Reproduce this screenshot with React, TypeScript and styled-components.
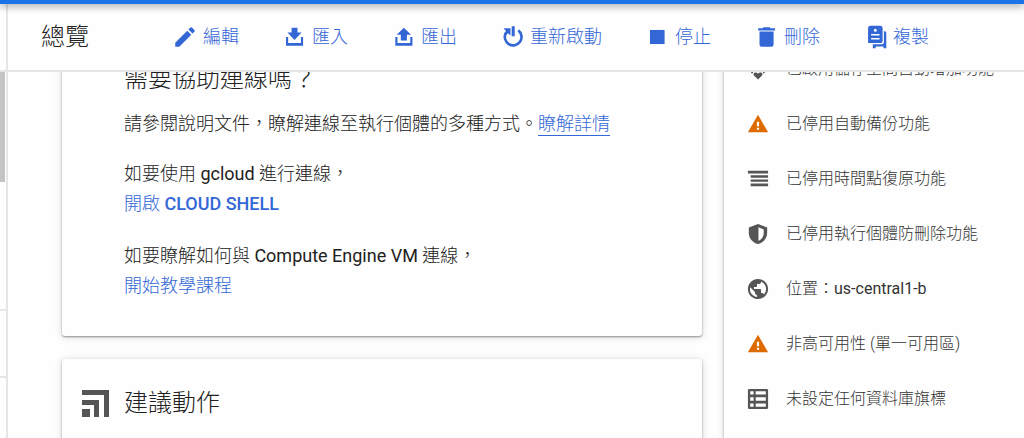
import React from 'react';
import styled, { createGlobalStyle, css } from 'styled-components';

const GlobalStyle = createGlobalStyle`
  * { box-sizing: border-box; }
  body {
    margin: 0;
    background: #fefefe;
    color: #212121;
    font-family: Roboto, "Noto Sans CJK TC", sans-serif;
    font-size: 18px;
    font-weight: 300;
  }
  h1, h2, p, ul { margin: 0; padding: 0; font-weight: 300; }
`;

const Page = styled.div`
  display: flex;
  flex-direction: column;
  height: 100vh;
  overflow: hidden;
`;

const TopBar = styled.div`
  position: relative;
  flex: none;
  height: 4px;
  background: #1a73e8;
  box-shadow: 0 1px 8px rgba(0, 0, 0, 0.6);
`;

const Shell = styled.div`
  display: flex;
  flex: 1;
  min-height: 0;
`;

const Rail = styled.nav`
  flex: none;
  display: flex;
  flex-direction: column;
  width: 8px;
  border-right: 2px solid #e6e6e6;
`;

const RailCell = styled.div<{ $height: number; $thumb?: boolean }>`
  height: ${(p) => p.$height}px;
  border-bottom: ${(p) => (p.$thumb ? 'none' : '2px solid #e6e6e6')};
  ${(p) => p.$thumb && css`
    width: 5px;
    background: #c4c4c4;
  `}
`;

const Workspace = styled.div`
  flex: 1;
  min-width: 0;
  display: flex;
  flex-direction: column;
`;

const Header = styled.header`
  flex: none;
  display: flex;
  align-items: center;
  gap: 83px;
  height: 68px;
  padding-left: 33px;
  border-bottom: 2px solid #e6e6e6;
  white-space: nowrap;
`;

const PageTitle = styled.h1`
  font-size: 24px;
  line-height: 32px;
`;

const Toolbar = styled.div`
  display: flex;
  gap: 42px;
`;

const ToolButton = styled.button`
  display: flex;
  align-items: center;
  gap: 5px;
  padding: 0;
  border: 0;
  background: none;
  color: #3367d6;
  font: inherit;
  line-height: 26px;
  cursor: pointer;
`;

const Viewport = styled.main`
  flex: 1;
  min-height: 0;
  overflow: hidden;
`;

const Columns = styled.div`
  display: flex;
  align-items: stretch;
  gap: 22px;
  margin-top: -40px;
  padding-left: 54px;
`;

const MainColumn = styled.div`
  flex: 1;
  min-width: 0;
  display: flex;
  flex-direction: column;
  gap: 23px;
`;

const Card = styled.section`
  background: #fefefe;
  border-radius: 3px;
  box-shadow: 0 1px 2px rgba(0, 0, 0, 0.4), 0 1px 8px rgba(0, 0, 0, 0.14);
`;

const HelpCard = styled(Card)`
  padding: 31px 20px 13px 62px;
`;

const ActionsCard = styled(Card)`
  display: flex;
  align-items: center;
  gap: 15px;
  padding: 28px 20px 60px;
`;

const CardTitle = styled.h2`
  font-size: 24px;
  line-height: 32px;
`;

const Paragraph = styled.p<{ $gap?: number }>`
  margin-top: ${(p) => p.$gap ?? 0}px;
  line-height: 30px;
`;

const Block = styled.div`
  margin: 20px 0 22px;
`;

const Link = styled.a<{ $underlined?: boolean }>`
  color: #3367d6;
  text-decoration: none;
  ${(p) => p.$underlined && css`
    padding-bottom: 1px;
    border-bottom: 1px solid #3367d6;
  `}
`;

const Latin = styled.span<{ $strong?: boolean }>`
  font-weight: ${(p) => (p.$strong ? 500 : 400)};
`;

const SummaryCard = styled(Card)`
  flex: none;
  width: 300px;
  padding-top: 9px;
`;

const SummaryList = styled.ul`
  list-style: none;
`;

const SummaryItem = styled.li`
  display: flex;
  align-items: center;
  gap: 17px;
  height: 55px;
  padding-left: 23px;
  color: #333;
  font-size: 16px;
  white-space: nowrap;
`;

const SummaryText = styled.span`
  padding-bottom: 4px;
`;

const Glyph = styled.svg<{ $size: number; $warn?: boolean }>`
  flex: none;
  display: block;
  width: ${(p) => p.$size}px;
  height: ${(p) => p.$size}px;
  fill: ${(p) => (p.$warn ? '#dd6b00' : 'currentColor')};
`;

const SummaryGlyph = styled(Glyph)`
  color: #555;
`;

const tools: { label: string; icon: React.ReactNode }[] = [
  {
    label: '編輯',
    icon: <path d="M3 17.25V21h3.75L17.81 9.94l-3.75-3.75L3 17.25zM20.71 7.04a1 1 0 0 0 0-1.41l-2.34-2.34a1 1 0 0 0-1.41 0l-1.83 1.83 3.75 3.75 1.83-1.83z" />,
  },
  {
    label: '匯入',
    icon: <path d="M9.8 3.4h5.4v4.4H19L12.5 14.8 6 7.8h3.8zM4.6 12h2v5.6h11.8V12h2v8H4.6z" />,
  },
  {
    label: '匯出',
    icon: <path d="M12.8 3.4 19.4 10h-3.8v5.2H10V10H6.2zM4.9 12h2v5.6h11.8V12h2v8H4.9z" />,
  },
  {
    label: '重新啟動',
    icon: (
      <>
        <path d="M17.8 5.9A7.700 7.700 0 1 1 6.400 8.200" fill="none" stroke="currentColor" strokeWidth="2.4" />
        <path d="M11.700 2h2.800v9.200h-2.800zM4.200 4h6.400v6.600L8.300 8.600 6.200 10.600 4.600 9.200 6.400 6.500z" />
      </>
    ),
  },
  { label: '停止', icon: <path d="M5.5 5.5h13.5v13H5.5z" /> },
  {
    label: '刪除',
    icon: <path d="M6 19a2 2 0 0 0 2 2h9a2 2 0 0 0 2-2V7H6v12zM20.3 3.9h-4l-1-.9h-5.6l-1 .9h-4V6h15.6z" />,
  },
  {
    label: '複製',
    icon: (
      <>
        <path fillRule="evenodd" d="M7.800 1.600h9a2.200 2.200 0 0 1 2.200 2.200v11.800a2 2 0 0 1-2 2H5.600V3.800a2.200 2.200 0 0 1 2.200-2.200zM12.300 4.400a1.400 1.400 0 1 0 0 2.800 1.400 1.400 0 0 0 0-2.800zM8.400 9.200v1.400h7.800V9.200zM8.400 13v1.400h7.800V13z" />
        <path d="M20.200 6.800h.8a1.400 1.400 0 0 1 1.400 1.400v14.200h-2.600v-1.600h-7.200v1.600H10v-3.600h8.200a2 2 0 0 0 2-2z" />
      </>
    ),
  },
];

const warning = <path d="M1 21h22L12 2 1 21zm12.200-2.600h-2.400v-2.400h2.400v2.400zm0-4h-2.400V9.600h2.400v4.800z" />;

const summary: { icon: React.ReactNode; text: React.ReactNode; warn?: boolean }[] = [
  { icon: <path d="M12 1l5 5h-3v3h-4V6H7zM1 12l5-5v10zM23 12l-5 5V7zM12 23.500l-4.500-4.500c-1.500-3 2-4.500 4.500-2 2.500-2.500 6-1 4.500 2zM4.500 14.500h2v2h-2zM17.500 14.500h2v2h-2z" />, text: '已啟用儲存空間自動增加功能' },
  { icon: warning, text: '已停用自動備份功能', warn: true },
  { icon: <path d="M1 3h22v3H1zM4 8h19v2.500H4zM4 12.500h19V15H4zM4 17h19v3H4z" />, text: '已停用時間點復原功能' },
  { icon: <path fillRule="evenodd" d="M12 1 2 5v6c0 5.600 4 10.700 10 12 6-1.300 10-6.400 10-12V5zm.5 3.700 5.700 2.400V11c0 4-2 7-5.700 8.700z" />, text: '已停用執行個體防刪除功能' },
  {
    icon: <path transform="translate(-1.2 -1.2) scale(1.1)" d="M12 2C6.480 2 2 6.480 2 12s4.480 10 10 10 10-4.480 10-10S17.520 2 12 2zm-1 17.930c-3.950-.49-7-3.850-7-7.930 0-.62.080-1.210.210-1.790L9 15v1c0 1.100.9 2 2 2v1.930zm6.900-2.540c-.26-.81-1-1.390-1.900-1.390h-1v-3c0-.55-.45-1-1-1H8v-2h2c.55 0 1-.45 1-1V7h2c1.100 0 2-.9 2-2v-.41c2.930 1.190 5 4.060 5 7.410 0 2.080-.8 3.970-2.100 5.390z" />,
    text: <>位置：<Latin>us-central1-b</Latin></>,
  },
  { icon: warning, text: '非高可用性 (單一可用區)', warn: true },
  { icon: <path fillRule="evenodd" d="M2.500 1h19A1.500 1.500 0 0 1 23 2.500v19a1.500 1.500 0 0 1-1.500 1.500h-19A1.500 1.500 0 0 1 1 21.500v-19A1.500 1.500 0 0 1 2.500 1zM3.500 3.500v3.700h3.700V3.500zM9.500 3.500v3.700h11V3.500zM3.500 10v4h3.700v-4zM9.500 10v4h11v-4zM3.500 16.800v3.700h3.700v-3.700zM9.500 16.800v3.700h11v-3.700z" />, text: '未設定任何資料庫旗標' },
];

export default function App() {
  return (
    <Page lang="zh-Hant">
      <GlobalStyle />
      <TopBar />
      <Shell>
        <Rail>
          <RailCell $height={68} />
          <RailCell $height={110} $thumb />
          <RailCell $height={129} />
          <RailCell $height={67} />
        </Rail>
        <Workspace>
          <Header>
            <PageTitle>總覽</PageTitle>
            <Toolbar role="toolbar">
              {tools.map((tool) => (
                <ToolButton key={tool.label} type="button">
                  <Glyph $size={26} viewBox="0 0 24 24" aria-hidden="true">{tool.icon}</Glyph>
                  {tool.label}
                </ToolButton>
              ))}
            </Toolbar>
          </Header>
          <Viewport>
            <Columns>
              <MainColumn>
                <HelpCard>
                  <CardTitle>需要協助連線嗎？</CardTitle>
                  <Paragraph $gap={14}>
                    請參閱說明文件，瞭解連線至執行個體的多種方式。<Link href="#docs" $underlined>瞭解詳情</Link>
                  </Paragraph>
                  <Block>
                    <Paragraph>如要使用 <Latin>gcloud</Latin> 進行連線，</Paragraph>
                    <Paragraph>
                      <Link href="#shell">開啟 <Latin $strong>CLOUD SHELL</Latin></Link>
                    </Paragraph>
                  </Block>
                  <Block>
                    <Paragraph>如要瞭解如何與 <Latin>Compute Engine VM</Latin> 連線，</Paragraph>
                    <Paragraph>
                      <Link href="#tutorial">開始教學課程</Link>
                    </Paragraph>
                  </Block>
                </HelpCard>
                <ActionsCard>
                  <SummaryGlyph $size={27} viewBox="0 0 27 27" aria-hidden="true">
                    <path d="M0 0h27v27h-5V5H0zM0 10h17v17h-5V15H0zM0 19h8v8H0z" />
                  </SummaryGlyph>
                  <CardTitle>建議動作</CardTitle>
                </ActionsCard>
              </MainColumn>
              <SummaryCard>
                <SummaryList>
                  {summary.map((item, i) => (
                    <SummaryItem key={i}>
                      <SummaryGlyph $size={22} $warn={item.warn} viewBox="0 0 24 24" aria-hidden="true">{item.icon}</SummaryGlyph>
                      <SummaryText>{item.text}</SummaryText>
                    </SummaryItem>
                  ))}
                </SummaryList>
              </SummaryCard>
            </Columns>
          </Viewport>
        </Workspace>
      </Shell>
    </Page>
  );
}
